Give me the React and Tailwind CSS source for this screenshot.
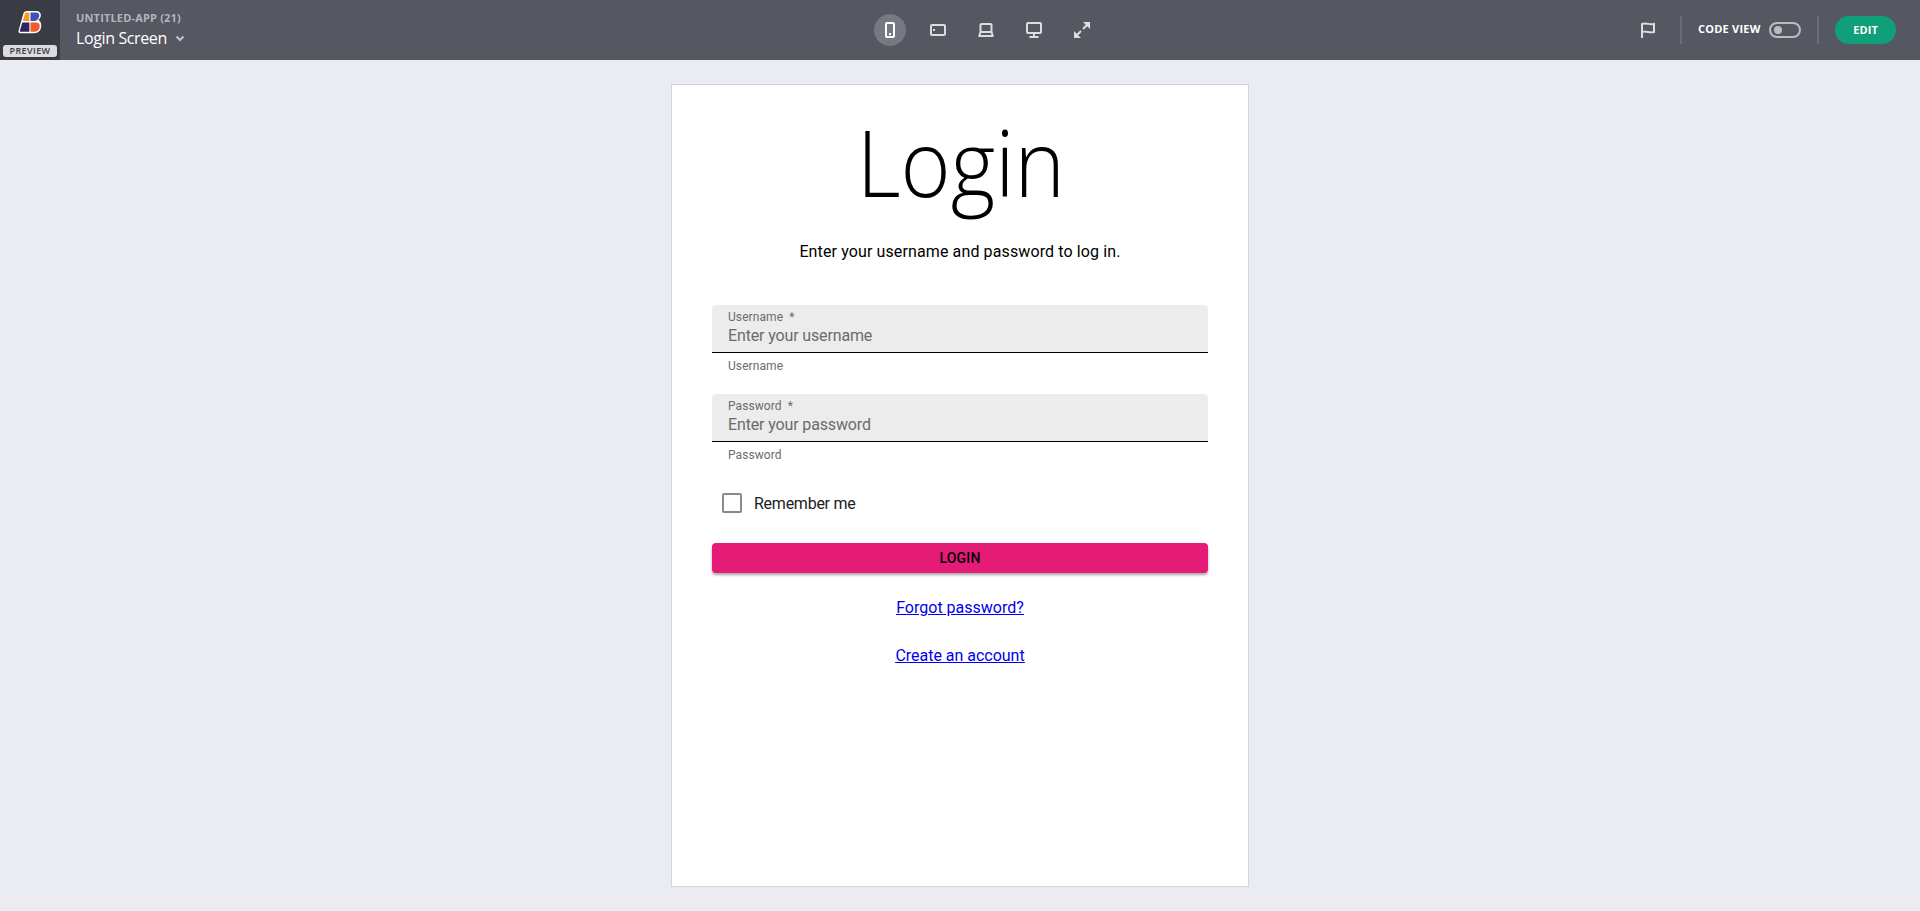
function Logo() {
  return (
    <svg width="25" height="25" viewBox="0 0 26 26" fill="none">
      <path d="M9 1h10c3.200 0 5.200 2.300 4.700 5.300-.3 1.800-1.300 3.300-2.500 4.200 1.900 1 3 3 3 5.600 0 5-3 8-7.600 8H2.500C.9 24.100.2 23 .6 21.500L5.500 4C6 2.200 7.300 1 9 1z" fill="#fff" />
      <path d="M9 2.500h2.800v9H5L7 4.400C7.300 3.200 8 2.500 9 2.500z" fill="#f79a2b" />
      <path d="M13 2.500h6c2.200 0 3.500 1.600 3.100 3.800-.5 3.200-2.500 5.200-5.500 5.200H13z" fill="#3f51b5" />
      <path d="M4.500 13h7.300v9.600H3c-.9 0-1.200-.5-1-1.300z" fill="#2b265f" />
      <path d="M13 13h5.600c2.600 0 4 1.400 4 3.600 0 3.700-2.400 6-6 6H13z" fill="#f15a29" />
    </svg>
  );
}

function Field({ label, placeholder }) {
  return (
    <div>
      <div className="h-12 rounded-t border-b border-black bg-[#ececec] px-4 pt-1 text-[#6b6b6b]">
        <div className="text-xs leading-4 tracking-[0.08px] whitespace-pre">{label + "  *"}</div>
        <div className="pt-px text-base leading-5 tracking-[-0.14px]">{placeholder}</div>
      </div>
      <div className="mt-[5px] px-4 text-xs leading-4 tracking-[0.08px] text-[#6b6b6b]">{label}</div>
    </div>
  );
}

export default function App() {
  return (
    <div className="h-[911px] w-full overflow-hidden bg-[#ebecf1]">
      <header className="grid h-[60px] grid-cols-[1fr_auto_1fr] bg-[#555761] font-['Open_Sans',sans-serif]">
        <div className="flex">
          <div className="flex w-[60px] flex-col items-center bg-[#3a3c45] pt-[10px]">
            <div className="h-[35px] pl-px"><Logo /></div>
            <div className="h-3 w-[54px] rounded-[3px] bg-[#dcdcde] text-center text-[9px] leading-3 font-semibold tracking-[0.4px] text-[#3a3c45]">PREVIEW</div>
          </div>
          <div className="pt-[10px] pl-4">
            <div className="text-[11px] leading-4 font-bold tracking-[0.17px] text-[#b4b5ba]">UNTITLED-APP (21)</div>
            <div className="flex items-center gap-2 text-base leading-6 text-white">
              <span className="tracking-[-0.38px]">Login Screen</span>
              <svg width="10" height="10" viewBox="0 0 10 10" fill="none" stroke="#c4c5c9" strokeWidth="2"><path d="M1.500 3.500 5 7l3.500-3.500" /></svg>
            </div>
          </div>
        </div>

        <div className="flex items-center gap-4 pl-[52px]">
          <div className="flex size-8 items-center justify-center rounded-full bg-[#777982]">
            <svg width="16" height="16" fill="none"><rect x="4" y="1" width="8" height="14" rx="1" stroke="#fff" strokeWidth="2" /><path d="M7 11h2v2H7z" fill="#fff" /></svg>
          </div>
          <div className="flex size-8 items-center justify-center">
            <svg width="16" height="16" fill="none"><rect x="1" y="3" width="14" height="10" rx="1" stroke="#dddddf" strokeWidth="2" /><path d="M3 7h2v2H3z" fill="#dddddf" /></svg>
          </div>
          <div className="flex size-8 items-center justify-center">
            <svg width="16" height="16" fill="none" stroke="#dddddf" strokeWidth="2"><path d="M2.500 10V3a1 1 0 0 1 1-1h9a1 1 0 0 1 1 1v7M2.500 10h11l1.300 4H1.200z" strokeLinejoin="round" /></svg>
          </div>
          <div className="flex size-8 items-center justify-center">
            <svg width="16" height="16" fill="none" stroke="#dddddf" strokeWidth="2"><rect x="1" y="1" width="14" height="10" rx="1" /><path d="M8 11v4M3.500 15h9" /></svg>
          </div>
          <div className="flex size-8 items-center justify-center">
            <svg width="16" height="16" fill="none" stroke="#dddddf" strokeWidth="2"><path d="m9 7 5-5M7 9l-5 5" /><path d="M9 0h7v7zM0 9v7h7z" fill="#dddddf" stroke="none" /></svg>
          </div>
        </div>

        <div className="flex items-center justify-end pr-6">
          <svg width="16" height="16" fill="none" stroke="#dddddf" strokeWidth="2" className="mr-6"><path d="M2 16V2c4-2 8 1.500 12 0v8c-4 1.500-8-1.500-12 0" /></svg>
          <div className="mr-4 h-7 w-0.5 bg-[#6b6d76]" />
          <span className="mr-2 w-[63px] pb-0.5 text-[11px] leading-4 font-bold tracking-[0.22px] whitespace-nowrap text-white">CODE VIEW</span>
          <div className="mr-4 flex h-4 w-8 items-center rounded-full border-2 border-[#bbbcc0] pl-[3px]">
            <div className="size-2 rounded-full bg-[#bbbcc0]" />
          </div>
          <div className="mr-4 h-7 w-0.5 bg-[#6b6d76]" />
          <button className="h-7 w-[61px] rounded-full bg-[#119f7a] text-[11px] font-bold tracking-[0.1px] text-white">EDIT</button>
        </div>
      </header>

      <main className="flex justify-center pt-6 font-['Roboto',sans-serif]">
        <div className="h-[803px] w-[578px] border border-[#d4d5da] bg-white px-10 pt-5">
          <h1 className="origin-center scale-x-[0.92] pl-0.5 text-center font-['Open_Sans',sans-serif] text-[93px] leading-[112px] font-[340] text-black">Login</h1>
          <p className="mt-[21px] text-center text-base leading-7 tracking-[0.12px] text-black">Enter your username and password to log in.</p>
          <div className="mt-[39px] flex flex-col gap-5">
            <Field label="Username" placeholder="Enter your username" />
            <Field label="Password" placeholder="Enter your password" />
          </div>
          <label className="mt-[30px] flex h-5 items-center gap-3 pl-[10px]">
            <span className="size-5 rounded-xs border-2 border-[#8a8a8a]" />
            <span className="pt-0.5 text-base leading-5 tracking-[-0.25px] text-[#212121]">Remember me</span>
          </label>
          <button className="mt-[30px] block h-[30px] w-full rounded bg-[#e51c77] text-sm font-medium tracking-[0.2px] text-black shadow-[0_2px_3px_rgba(0,0,0,0.35)]">LOGIN</button>
          <div className="mt-[23px] flex flex-col items-center gap-6 text-base leading-6 text-[#0000ee] underline">
            <a>Forgot password?</a>
            <a className="tracking-[-0.02px]">Create an account</a>
          </div>
        </div>
      </main>
    </div>
  );
}
